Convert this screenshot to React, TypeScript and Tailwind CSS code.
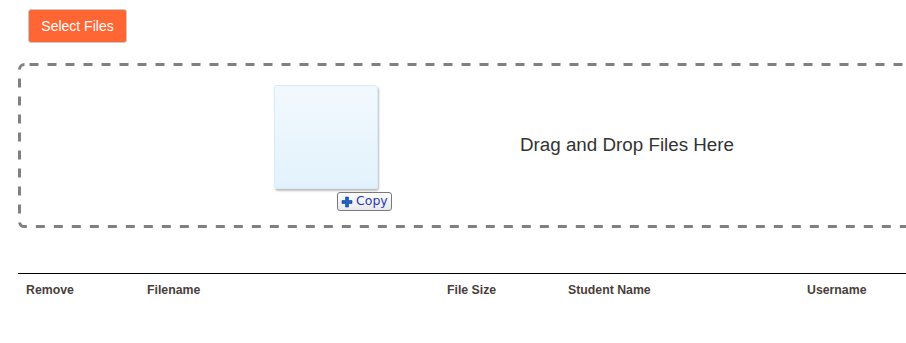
import React from "react";

export default function App() {
  const font = { fontFamily: '"Liberation Sans", Arial, sans-serif' };
  return (
    <div className="relative w-[906px] h-[343px] overflow-hidden bg-white" style={font}>
      <div className="pt-[9px] pl-[28px]">
        <button className="h-[34px] w-[99px] rounded-[3px] border border-[#c8c8c8] bg-[#ff6633] text-[14px] text-white">
          Select Files
        </button>
      </div>
      <div className="relative ml-[18px] mt-[20px] w-[1220px] h-[165px] flex items-center">
        <svg className="absolute inset-0" width="1220" height="165">
          <rect
            x="1.5"
            y="1.5"
            width="1217"
            height="162"
            rx="5"
            fill="none"
            stroke="#808080"
            strokeWidth="3"
            strokeDasharray="9 9"
            strokeDashoffset="-5"
          />
        </svg>
        <span className="relative ml-[502px] text-[18.8px] text-[#333333]">Drag and Drop Files Here</span>
      </div>
      <div className="ml-[18px] mt-[45px] w-[1000px] border-t border-black flex text-[12.3px] font-bold text-[#4a403b] pt-[7px]">
        <div className="w-[121px] pl-[8px]">Remove</div>
        <div className="w-[300px] pl-[8px]">Filename</div>
        <div className="w-[121px] pl-[8px]">File Size</div>
        <div className="w-[239px] pl-[8px]">Student Name</div>
        <div className="w-[150px] pl-[8px]">Username</div>
      </div>

      {/* drag ghost overlay */}
      <div className="absolute left-[274px] top-[85px] w-[104px] h-[104px] rounded-[3px] border border-[#d6ecfa] bg-gradient-to-b from-[#f2f9fe] to-[#e2f2fc] shadow-[1px_2px_2px_rgba(0,0,0,0.25)]" />
      <div className="absolute left-[337px] top-[192px] h-[19px] w-[55px] rounded-[3px] border border-[#7a7a7a] bg-gradient-to-b from-white to-[#e8e8ee] flex items-center pl-[3px] gap-[3px] text-[12px] text-[#1f3cb0]">
        <svg width="12" height="12" viewBox="0 0 12 12">
          <path d="M4.5 1h3v3.5H11v3H7.5V11h-3V7.5H1v-3h3.5z" fill="#1e5fc8" stroke="#0d3f8f" strokeWidth="0.6" />
        </svg>
        <span style={{ fontFamily: '"DejaVu Sans", "Liberation Sans", sans-serif' }} className="text-[12.5px] leading-none">Copy</span>
      </div>
    </div>
  );
}
